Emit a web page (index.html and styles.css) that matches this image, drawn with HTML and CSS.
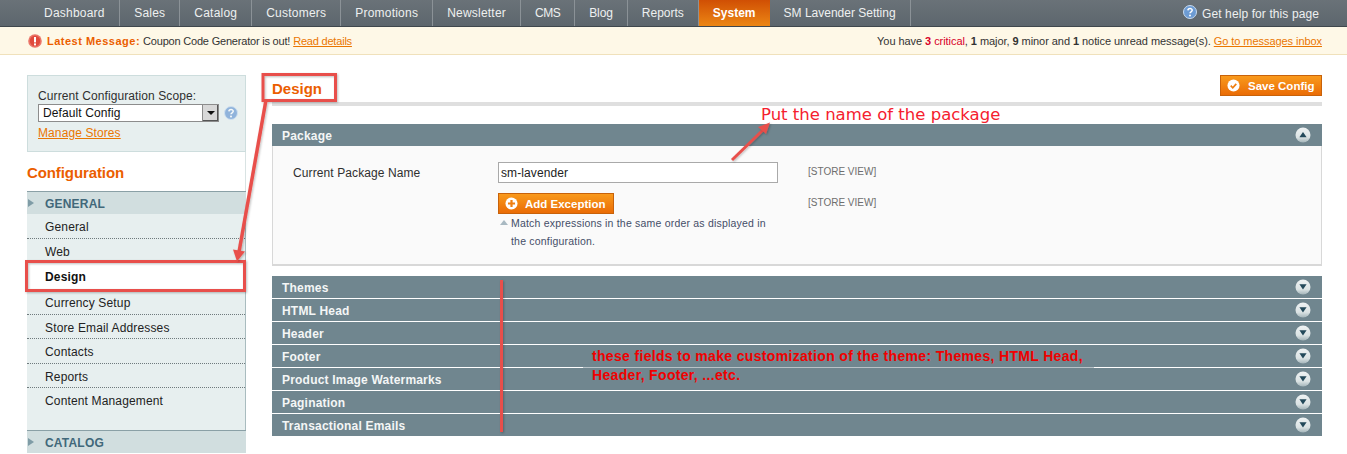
FILE: index.html
```html
<!DOCTYPE html>
<html lang="en">
<head>
<meta charset="utf-8">
<title>Configuration / Design</title>
<link rel="stylesheet" href="styles.css">
</head>
<body>
<svg class="defs" width="0" height="0" aria-hidden="true">
  <defs>
    <linearGradient id="ballFill" x1="0" y1="0" x2="0" y2="1">
      <stop offset="0" stop-color="#eef2f3"/><stop offset="0.65" stop-color="#dbe3e4"/><stop offset="1" stop-color="#a4b5ba"/>
    </linearGradient>
    <symbol id="ico-down" viewBox="0 0 16 16">
      <circle cx="8" cy="8" r="7.500" fill="url(#ballFill)"/>
      <path d="M4.400 5.200h7.200L8 10.400z" fill="#23495a"/>
    </symbol>
    <symbol id="ico-up" viewBox="0 0 16 16">
      <circle cx="8" cy="8" r="7.500" fill="url(#ballFill)"/>
      <path d="M4.400 10.200h7.200L8 5z" fill="#23495a"/>
    </symbol>
    <symbol id="ico-help" viewBox="0 0 14 14">
      <circle cx="7" cy="7" r="6.500" fill="#6c9bd3" stroke="#c6daf0" stroke-width="1"/>
      <path d="M4.900 5.400C5 3 9.200 3 9.200 5.300 9.200 6.800 7 6.800 7 8.300" fill="none" stroke="#fff" stroke-width="1.500"/>
      <circle cx="7" cy="10.400" r="1" fill="#fff"/>
    </symbol>
  </defs>
</svg>
<div class="app">
  <nav class="nav">
    <ul class="nav-list">
      <li class="nav-item">Dashboard</li>
      <li class="nav-item nav-wide">Sales</li>
      <li class="nav-item">Catalog</li>
      <li class="nav-item">Customers</li>
      <li class="nav-item">Promotions</li>
      <li class="nav-item">Newsletter</li>
      <li class="nav-item nav-short">CMS</li>
      <li class="nav-item nav-tight">Blog</li>
      <li class="nav-item nav-long">Reports</li>
      <li class="nav-item nav-active">System</li>
      <li class="nav-item nav-long">SM Lavender Setting</li>
    </ul>
    <a class="nav-help"><svg class="help-ico"><use href="#ico-help"/></svg>Get help for this page</a>
  </nav>
  <div class="notice">
    <div class="notice-left">
      <svg class="alert-ico" viewBox="0 0 14 14"><circle cx="7" cy="7" r="6.800" fill="#ea7468"/><circle cx="7" cy="7" r="5.200" fill="#e04a3c"/><rect x="6" y="3" width="2" height="5.400" fill="#fff"/><rect x="6" y="9.400" width="2" height="2" fill="#fff"/></svg>
      <strong class="notice-label">Latest Message:</strong>
      <span>Coupon Code Generator is out!</span>
      <a class="link">Read details</a>
    </div>
    <div class="notice-right">You have <b class="crit">3</b> <span class="crit">critical</span>, <b>1</b> major, <b>9</b> minor and <b>1</b> notice unread message(s). <a class="link">Go to messages inbox</a></div>
  </div>
  <div class="layout">
    <aside class="side">
      <div class="scope">
        <div class="scope-label">Current Configuration Scope:</div>
        <div class="scope-row">
          <div class="select"><span class="select-val">Default Config</span><span class="select-btn"><i class="select-arrow"></i></span></div>
          <svg class="scope-help"><use href="#ico-help"/></svg>
        </div>
        <a class="link scope-link">Manage Stores</a>
      </div>
      <h3 class="side-title">Configuration</h3>
      <div class="menu-head"><i class="menu-caret"></i>GENERAL</div>
      <ul class="menu">
        <li class="menu-item">General</li>
        <li class="menu-item">Web</li>
        <li class="menu-item menu-active">Design</li>
        <li class="menu-item">Currency Setup</li>
        <li class="menu-item">Store Email Addresses</li>
        <li class="menu-item">Contacts</li>
        <li class="menu-item">Reports</li>
        <li class="menu-item menu-last">Content Management</li>
      </ul>
      <div class="menu-head"><i class="menu-caret"></i>CATALOG</div>
    </aside>
    <main class="content">
      <header class="title-row">
        <h3 class="page-title">Design</h3>
        <button class="btn btn-save"><svg class="btn-ico" viewBox="0 0 14 14"><circle cx="7" cy="7" r="6.500" fill="#fff"/><path d="M4 7.200l2.200 2.200L10 5.200" fill="none" stroke="#ef7f12" stroke-width="1.800"/></svg>Save Config</button>
      </header>
      <section class="panel">
        <div class="bar"><span class="bar-text">Package</span><svg class="bar-ico"><use href="#ico-up"/></svg></div>
        <div class="panel-body">
          <label class="field-label">Current Package Name</label>
          <input class="field-input" value="sm-lavender">
          <span class="field-scope">[STORE VIEW]</span>
          <span></span>
          <div class="field-stack">
            <button class="btn btn-add"><svg class="btn-ico" viewBox="0 0 14 14"><circle cx="7" cy="7" r="6.500" fill="#fff"/><path d="M7 3.200v7.600M3.200 7h7.600" stroke="#ef7f12" stroke-width="2.400"/></svg>Add Exception</button>
            <p class="note">Match expressions in the same order as displayed in the configuration.</p>
          </div>
          <span class="field-scope field-scope-2">[STORE VIEW]</span>
        </div>
      </section>
      <section class="stack">
        <div class="bar"><span class="bar-text">Themes</span><svg class="bar-ico"><use href="#ico-down"/></svg></div>
        <div class="bar"><span class="bar-text">HTML Head</span><svg class="bar-ico"><use href="#ico-down"/></svg></div>
        <div class="bar"><span class="bar-text">Header</span><svg class="bar-ico"><use href="#ico-down"/></svg></div>
        <div class="bar"><span class="bar-text">Footer</span><svg class="bar-ico"><use href="#ico-down"/></svg></div>
        <div class="bar"><span class="bar-text">Product Image Watermarks</span><svg class="bar-ico"><use href="#ico-down"/></svg></div>
        <div class="bar"><span class="bar-text">Pagination</span><svg class="bar-ico"><use href="#ico-down"/></svg></div>
        <div class="bar"><span class="bar-text">Transactional Emails</span><svg class="bar-ico"><use href="#ico-down"/></svg></div>
      </section>
    </main>
  </div>
  <svg class="marks" width="1347" height="454" viewBox="0 0 1347 454" aria-hidden="true">
    <defs><filter id="soft" x="-20%" y="-20%" width="140%" height="140%"><feDropShadow dx="1" dy="1" stdDeviation="1" flood-color="#000" flood-opacity=".25"/></filter></defs>
    <g fill="none" stroke="#e8504b" stroke-width="3" filter="url(#soft)">
      <rect x="263" y="74.500" width="72.500" height="26"/>
      <rect x="26.500" y="261.500" width="218" height="29"/>
      <path d="M266 100L239 252" stroke-width="3.500"/>
      <path d="M732 160L764 129"/>
      <path d="M501.500 280V432"/>
    </g>
    <g fill="#e8504b" filter="url(#soft)">
      <path d="M233 249.500L245 251.500L237 261.500z"/>
      <path d="M758 127L770 122.500L766 134z"/>
    </g>
  </svg>
  <div class="callout callout-name">Put the name of the package</div>
  <div class="callout callout-fields">these fields to make customization of the theme: Themes, HTML Head, Header, Footer, ...etc.</div>
</div>
</body>
</html>
```

FILE: styles.css
```css
* { box-sizing: border-box; }
html, body { margin: 0; padding: 0; background: #fff; }
body { font-family: "Liberation Sans", Arial, sans-serif; font-size: 12px; color: #2f2f2f; }
.defs { position: absolute; }
.app { position: relative; width: 1347px; height: 454px; overflow: hidden; }
ul { list-style: none; margin: 0; padding: 0; }
h3, p { margin: 0; }

.nav { display: flex; justify-content: space-between; height: 27px; padding: 0 28px 0 30px; background: linear-gradient(#6a7278, #5d666d); border-bottom: 1px solid #3f474d; }
.nav-list { display: flex; }
.nav-item { height: 26px; line-height: 27px; padding: 0 14px; font-size: 12px; letter-spacing: .22px; color: #eef0f0; border-right: 1px solid #8b9297; }
.nav-active { background: linear-gradient(#d04f04, #ec8614); font-weight: bold; color: #fff; border-right: 0; letter-spacing: 0; }
.nav-long { letter-spacing: 0; }
.nav-short { letter-spacing: -.5px; }
.nav-tight { letter-spacing: -.1px; }
.nav-wide { padding-left: 14.500px; }
.nav-help { display: flex; align-items: center; height: 26px; padding-top: 1px; color: #eef0f0; letter-spacing: .1px; }
.help-ico { width: 14px; height: 14px; margin-right: 5px; margin-top: -3px; }

.notice { display: flex; justify-content: space-between; align-items: center; height: 28px; padding: 0 25px 0 28px; background: #fef8e7; border-bottom: 1px solid #f0e1bb; font-size: 11px; color: #333; }
.notice-left { display: flex; align-items: center; letter-spacing: -.2px; }
.notice-right { letter-spacing: -.06px; }
.alert-ico { width: 14px; height: 14px; margin-right: 5px; }
.notice-label { color: #eb5e00; font-size: 11px; margin-right: 3px; letter-spacing: .5px; }
.link { color: #ea7601; text-decoration: underline; }
.notice-left .link { margin-left: 3px; }
.crit { color: #d8002a; }

.layout { display: flex; gap: 26px; padding: 20px 25px 0 27px; }
.side { flex: 0 0 219px; min-width: 0; }
.scope { height: 77px; padding: 13px 0 0 10px; background: #e7efef; border: 1px solid #cddddd; }
.scope-label { font-size: 12px; line-height: 14px; color: #2f2f2f; letter-spacing: .1px; }
.scope-row { display: flex; align-items: center; height: 18px; margin-top: 1px; }
.select { display: flex; width: 181px; height: 18px; background: #fff; border: 1px solid #8c8c8c; }
.select-val { flex: 1; padding-left: 4px; line-height: 17px; color: #111; letter-spacing: .1px; }
.select-btn { display: flex; align-items: center; justify-content: center; width: 16px; background: #d8d8d8; border-left: 1px solid #8c8c8c; box-shadow: inset -1px -1px 0 #555; }
.select-arrow { width: 0; height: 0; border: 4px solid transparent; border-top: 4px solid #111; border-bottom: 0; }
.scope-help { width: 14px; height: 14px; margin-left: 5px; opacity: .7; }
.scope-link { display: block; margin-top: 4px; line-height: 15px; letter-spacing: .1px; }
.side-title { height: 39px; padding-top: 12px; background: #fff; border-right: 1px solid #d9e3e3; font-size: 15px; line-height: 18px; color: #eb5e00; letter-spacing: -.1px; }
.menu-head { position: relative; height: 23px; padding-left: 18px; background: #d1dedf; border-top: 1px solid #8aa0a6; line-height: 24px; font-weight: bold; color: #41687a; letter-spacing: .2px; }
.menu-caret { position: absolute; left: 1px; top: 7px; width: 0; height: 0; border: 4px solid transparent; border-left: 6px solid #7f9ca6; border-right: 0; }
.menu { background: #e7efef; border-right: 1px solid #a9bcbf; }
.menu-item { height: 24.500px; padding-left: 18px; line-height: 27px; color: #222; letter-spacing: .15px; border-bottom: 1px dotted #6f7a7d; }
.menu-active { height: 28px; margin-top: -1px; line-height: 30px; background: #fff; font-weight: bold; border-bottom: 1px solid #ccc; color: #111; }
.menu-last { height: 42px; border-bottom: 0; }

.content { flex: 1; min-width: 0; }
.title-row { display: flex; justify-content: space-between; height: 31px; border-bottom: 4px solid #dfdfdf; }
.page-title { font-size: 15px; line-height: 27px; color: #eb5e00; }
.btn { display: inline-flex; align-items: center; height: 21px; padding: 0 6px; border: 1px solid #c8620a; background: linear-gradient(#f99a1c, #ea6c06); color: #fff; font-family: inherit; font-size: 11.500px; font-weight: bold; white-space: nowrap; }
.btn-save { width: 102px; }
.btn-add { width: 116px; }
.btn-ico { width: 13px; height: 13px; margin-right: 8px; flex: none; }
.btn-add .btn-ico { margin-right: 7px; }
.panel { margin-top: 18px; }
.bar { display: flex; justify-content: space-between; align-items: center; height: 22px; padding: 0 11px 0 10px; background: #70868f; color: #f4f6f6; font-weight: bold; letter-spacing: .2px; }
.bar-text { padding-top: 2px; }
.bar-ico { width: 16px; height: 16px; }
.panel-body { display: grid; grid-template-columns: 205px 280px auto; column-gap: 0; height: 120px; padding: 16px 0 0 20px; background: #fafafa; border: 1px solid #d8d8d8; border-bottom-width: 2px; border-top: 0; align-content: start; }
.field-label { line-height: 23px; color: #2f2f2f; letter-spacing: .1px; }
.field-input { width: 280px; height: 21px; padding: 0 2px; border: 1px solid #a9a9a9; font-family: inherit; font-size: 12px; color: #222; letter-spacing: .1px; }
.field-scope { margin-left: 30px; font-size: 10px; line-height: 20px; color: #6e6e6e; }
.field-scope-2 { margin-top: 8px; line-height: 19px; }
.field-stack { margin-top: 8px; }
.note { width: 280px; margin-top: 0; padding: 0 0 0 13px; font-size: 10.500px; line-height: 18px; color: #444e68; letter-spacing: .2px; position: relative; }
.note::before { content: ""; position: absolute; left: 2px; top: 6px; border: 4px solid transparent; border-bottom: 5px solid #a9b9c2; border-top: 0; }
.stack { display: flex; flex-direction: column; gap: 1px; margin-top: 10px; }

.marks { position: absolute; left: 0; top: 0; pointer-events: none; }
.callout { position: absolute; }
.callout-name { left: 761px; top: 105px; font-family: "DejaVu Sans", sans-serif; font-size: 16.500px; line-height: 20px; color: #f5202e; white-space: nowrap; }
.callout-fields { left: 583px; top: 347px; width: 511px; height: 39px; padding: 0 0 0 9px; background: rgba(112,134,143,.5); font-size: 14px; font-weight: bold; line-height: 19px; color: #f00000; letter-spacing: .33px; }
```
